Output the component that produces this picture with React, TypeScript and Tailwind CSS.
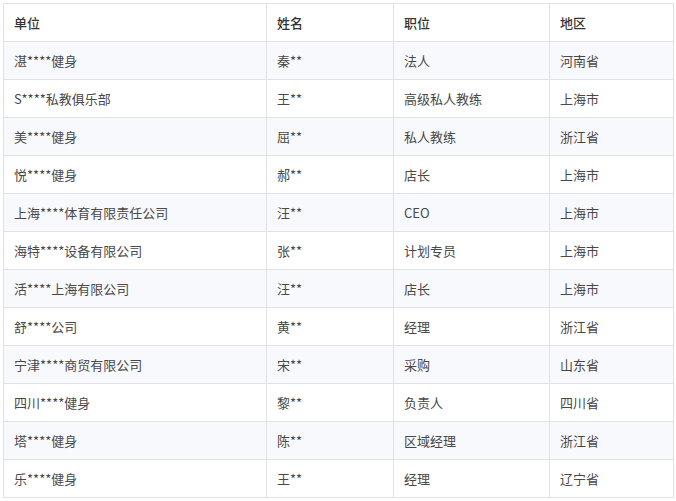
import React from 'react';

const rows: string[][] = [
  ['湛****健身', '秦**', '法人', '河南省'],
  ['S****私教俱乐部', '王**', '高级私人教练', '上海市'],
  ['美****健身', '屈**', '私人教练', '浙江省'],
  ['悦****健身', '郝**', '店长', '上海市'],
  ['上海****体育有限责任公司', '汪**', 'CEO', '上海市'],
  ['海特****设备有限公司', '张**', '计划专员', '上海市'],
  ['活****上海有限公司', '汪**', '店长', '上海市'],
  ['舒****公司', '黄**', '经理', '浙江省'],
  ['宁津****商贸有限公司', '宋**', '采购', '山东省'],
  ['四川****健身', '黎**', '负责人', '四川省'],
  ['塔****健身', '陈**', '区域经理', '浙江省'],
  ['乐****健身', '王**', '经理', '辽宁省'],
];

const headers = ['单位', '姓名', '职位', '地区'];

export default function App() {
  return (
    <div
      className="w-[676px] h-[501px] bg-white pt-[3px] pl-[3px]"
      style={{ fontFamily: '"Noto Sans CJK SC", "Liberation Sans", sans-serif' }}
    >
      <table className="border-collapse table-fixed w-[670px] text-[13px]">
        <colgroup>
          <col className="w-[263px]" />
          <col className="w-[127px]" />
          <col className="w-[156px]" />
          <col className="w-[124px]" />
        </colgroup>
        <thead>
          <tr className="h-[38px] bg-white">
            {headers.map((h) => (
              <th
                key={h}
                className="border border-[#dfe2e5] px-[10px] text-left font-medium text-[#333]"
              >
                {h}
              </th>
            ))}
          </tr>
        </thead>
        <tbody>
          {rows.map((r, i) => (
            <tr key={i} className={i % 2 === 0 ? 'h-[38px] bg-[#f8f9fc]' : 'h-[38px] bg-white'}>
              {r.map((c, j) => (
                <td key={j} className="border border-[#dfe2e5] px-[10px] text-[#484848]">
                  {c}
                </td>
              ))}
            </tr>
          ))}
        </tbody>
      </table>
    </div>
  );
}
